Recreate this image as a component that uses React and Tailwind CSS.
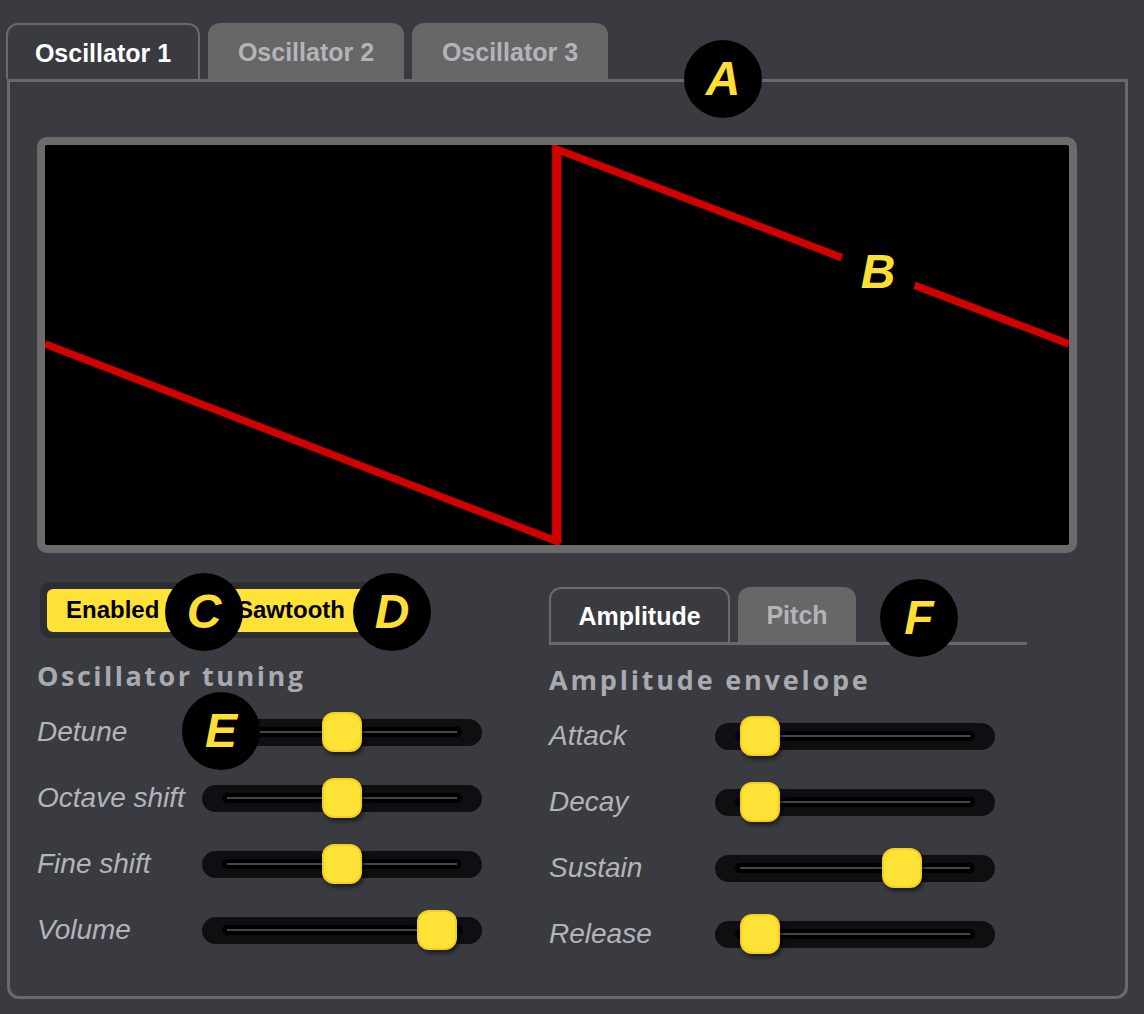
import React from "react";

const LABEL = { fontFamily: '"Liberation Sans", Arial, sans-serif' };
const HEAD = { fontFamily: '"Open Sans", "Noto Sans", sans-serif' };

function Slider({ label, pos, right }) {
  return (
    <div className="flex h-[66px] items-center">
      <div
        className={
          right
            ? "w-[166px] text-[28px] italic leading-none text-[#b3b4ba]"
            : "w-[165px] text-[28px] italic leading-none text-[#b3b4ba]"
        }
        style={LABEL}
      >
        {label}
      </div>
      <div className="relative flex h-[27px] w-[280px] items-center rounded-full bg-[#0f0f12] px-[20px]">
        <div className="flex h-[10px] w-full items-center rounded-full bg-black px-[5px]">
          <div className="h-[2px] w-full bg-[#45454a]"></div>
        </div>
        <div
          className="absolute top-[-7px] h-[40px] w-[40px] rounded-[12px] border-2 border-[#f5cf1f] bg-[#ffe236] shadow-[2px_3px_4px_rgba(0,0,0,0.55)]"
          style={{ left: pos - 20 }}
        ></div>
      </div>
    </div>
  );
}

function Badge({ letter, cls }) {
  return (
    <div className={cls}>
      <span
        className="text-[48px] font-bold italic leading-none text-[#ffdf33]"
        style={LABEL}
      >
        {letter}
      </span>
    </div>
  );
}

const badgeBase =
  "absolute flex h-[78px] w-[78px] items-center justify-center rounded-full bg-black";

export default function App() {
  return (
    <div className="relative h-[1014px] w-full overflow-hidden bg-[#3a3b40] pl-[6px] pt-[23px]">
      {/* top tabs */}
      <div className="flex h-[56px] items-end gap-[8px]" style={LABEL}>
        <div className="flex h-[56px] w-[194px] items-center justify-center rounded-t-[12px] border-2 border-b-0 border-[#6a6a6a] pt-[3px] text-[25px] font-bold text-white">
          Oscillator 1
        </div>
        <div className="flex h-[56px] w-[196px] items-center justify-center rounded-t-[12px] bg-[#676767] pt-[3px] text-[25px] font-bold text-[#b3b4ba]">
          Oscillator 2
        </div>
        <div className="flex h-[56px] w-[196px] items-center justify-center rounded-t-[12px] bg-[#676767] pt-[3px] text-[25px] font-bold text-[#b3b4ba]">
          Oscillator 3
        </div>
      </div>

      {/* panel */}
      <div className="ml-[1px] h-[920px] w-[1121px] rounded-b-[12px] border-[3px] border-[#6a6a6a] pl-[27px] pt-[55px]">
        {/* waveform */}
        <div className="h-[416px] w-[1040px] overflow-hidden rounded-[10px] border-[8px] border-[#6b6b6b] bg-black">
          <svg width="1024" height="400" viewBox="0 0 1024 400" className="block">
            <polyline
              points="0,199 511,396 511,4 1024,199"
              fill="none"
              stroke="#d30000"
              strokeWidth="7.5"
              strokeLinejoin="miter"
            />
            <line x1="512" y1="2" x2="512" y2="398" stroke="#d30000" strokeWidth="9" />
          </svg>
        </div>

        {/* controls */}
        <div className="flex items-start">
          {/* left column */}
          <div className="w-[512px] pt-[29px]">
            <div className="ml-[3px] flex h-[56px] w-[336px] items-center gap-[6px] rounded-[10px] bg-[#2d2e32] px-[7px]" style={LABEL}>
              <div className="flex h-[43px] w-[165px] items-center rounded-[6px] bg-[#ffe236] pl-[19px] text-[24px] font-bold text-black">
                Enabled
              </div>
              <div className="flex h-[43px] flex-1 items-center rounded-[6px] bg-[#ffe236] pl-[19px] text-[24px] font-bold text-black">
                Sawtooth
              </div>
            </div>
            <div
              className="mt-[22px] h-[32px] text-[27px] font-bold leading-[32px] tracking-[2.5px] text-[#a9aaaf]"
              style={HEAD}
            >
              Oscillator tuning
            </div>
            <div className="mt-[7px]">
              <Slider label="Detune" pos={140} />
              <Slider label="Octave shift" pos={140} />
              <Slider label="Fine shift" pos={140} />
              <Slider label="Volume" pos={235} />
            </div>
          </div>

          {/* right column */}
          <div className="w-[480px] pt-[34px]">
            <div className="flex h-[58px] w-[478px] items-end gap-[8px] border-b-[3px] border-[#6a6a6a]" style={LABEL}>
              <div className="flex h-[55px] w-[181px] items-center justify-center rounded-t-[12px] border-2 border-b-0 border-[#6a6a6a] pt-[3px] text-[25px] font-bold text-white">
                Amplitude
              </div>
              <div className="flex h-[55px] w-[118px] items-center justify-center rounded-t-[12px] bg-[#676767] pt-[3px] text-[25px] font-bold text-[#b3b4ba]">
                Pitch
              </div>
            </div>
            <div
              className="mt-[19px] h-[32px] text-[27px] font-bold leading-[32px] tracking-[2.8px] text-[#a9aaaf]"
              style={HEAD}
            >
              Amplitude envelope
            </div>
            <div className="mt-[7px]">
              <Slider label="Attack" pos={45} right />
              <Slider label="Decay" pos={45} right />
              <Slider label="Sustain" pos={187} right />
              <Slider label="Release" pos={45} right />
            </div>
          </div>
        </div>
      </div>

      {/* annotations */}
      <Badge letter="A" cls={badgeBase + " left-[684px] top-[40px]"} />
      <Badge letter="B" cls={badgeBase + " left-[839px] top-[233px]"} />
      <Badge letter="C" cls={badgeBase + " left-[165px] top-[573px]"} />
      <Badge letter="D" cls={badgeBase + " left-[353px] top-[573px]"} />
      <Badge letter="E" cls={badgeBase + " left-[182px] top-[692px]"} />
      <Badge letter="F" cls={badgeBase + " left-[880px] top-[579px]"} />
    </div>
  );
}
